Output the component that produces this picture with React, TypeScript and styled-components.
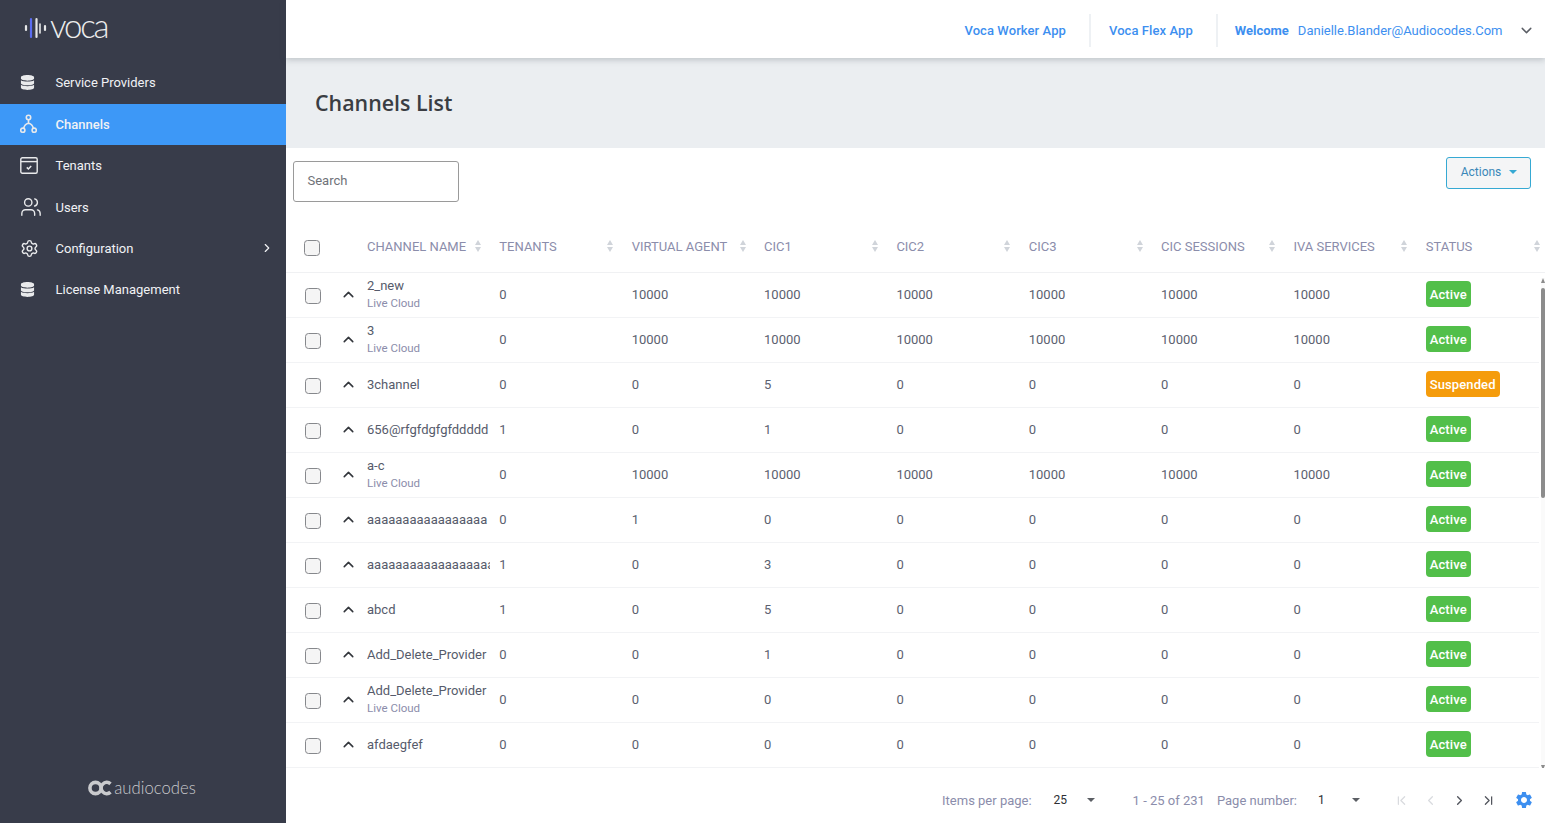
import React from "react";
import styled, { createGlobalStyle } from "styled-components";
import { Users, Settings, ChevronRight, ChevronDown, ChevronUp, ChevronFirst, ChevronLeft, ChevronLast } from "lucide-react";
import { FaDatabase } from "react-icons/fa";
import { MdSettings } from "react-icons/md";

const Global = createGlobalStyle`
  html, body { margin: 0; padding: 0; height: 100%; overflow: hidden; background: #fff; }
  body { font-family: Roboto, "Liberation Sans", sans-serif; font-size: 13px; }
  #root { height: 100%; }
  * { box-sizing: border-box; }
`;

const Shell = styled.div`display: flex; height: 823px; width: 1545px; overflow: hidden;`;
const Sidebar = styled.aside`width: 286px; flex: none; background: #383c4a; display: flex; flex-direction: column; color: #f0f1f4;`;
const LogoRow = styled.div`height: 62.2px; display: flex; align-items: center; padding: 0 0 6px 24px; gap: 0;`;
const LogoWord = styled.span`font-family: Lato, sans-serif; font-weight: 300; font-size: 33px; line-height: 30px; letter-spacing: -2.2px; color: #eceded; position: relative; top: -3px;`;
const Nav = styled.nav`display: flex; flex-direction: column;`;
const NavItem = styled.div<{ $active?: boolean }>`
  height: 41.4px; display: flex; align-items: center; padding: 0 12px 0 20px;
  background: ${p => (p.$active ? "#3d98f7" : "transparent")};
  font-size: 13px; font-weight: ${p => (p.$active ? 500 : 400)}; color: #f1f2f5;
`;
const NavIcon = styled.span`width: 35.5px; flex: none; display: flex; align-items: center; color: #e9eaec;`;
const NavLabel = styled.span`flex: 1;`;
const Footer = styled.div`margin-top: auto; height: 70px; display: flex; align-items: flex-start; justify-content: center; padding: 27px 2px 0 0; gap: 2px; color: #c9cacd;`;
const FooterWord = styled.span`font-family: Lato, sans-serif; font-weight: 300; font-size: 16.7px; line-height: 16px;`;

const Main = styled.main`flex: 1; min-width: 0; display: flex; flex-direction: column;`;
const Header = styled.header`height: 58px; flex: none; background: #fff; display: flex; align-items: center; justify-content: flex-end; box-shadow: 0 2px 6px rgba(60,70,80,.25); position: relative; z-index: 1; padding: 2px 10.5px 0 0;`;
const HeaderLink = styled.a`color: #3d8ff0; font-weight: 500; font-size: 13px; letter-spacing: .08px; padding: 0 23px 0 18px; height: 33px; display: flex; align-items: center; border-right: 2px solid #eef1f4;`;
const Welcome = styled.span`color: #3d8ff0; font-weight: 700; font-size: 13px; padding-left: 17px;`;
const Email = styled.span`color: #3d8ff0; font-size: 13px; margin-left: 9px;`;
const HeaderChevron = styled.span`display: flex; margin-left: 15px; color: #5b5f66;`;
const TitleBand = styled.div`height: 90px; flex: none; background: #ebeef1; display: flex; align-items: center; padding: 0 0 2px 29px;`;
const Title = styled.h1`margin: 0; font-family: "Open Sans", sans-serif; font-weight: 600; font-size: 21.4px; color: #3a3d43;`;
const Toolbar = styled.div`height: 74px; flex: none; display: flex; align-items: flex-start; justify-content: space-between; padding: 9px 14px 0 7px;`;
const Search = styled.div`width: 166px; height: 41px; margin-top: 4px; border: 1px solid #9a9a9a; border-radius: 3px; padding: 0 14px 2px 13.5px; display: flex; align-items: center; color: #6f7278; font-size: 13px;`;
const ActionsButton = styled.button`width: 85px; height: 32px; border: 1px solid #36a9d3; border-radius: 3px; background: #f4f5f6; color: #3a87b8; font: 400 12px Roboto, sans-serif; display: flex; align-items: center; justify-content: center; gap: 8px; padding: 0 0 3px 1px;`;
const Caret = styled.span<{ $c?: string }>`width: 0; height: 0; border-left: 4px solid transparent; border-right: 4px solid transparent; border-top: 4px solid ${p => p.$c ?? "#36a9d3"};`;

const TableWrap = styled.div`flex: 1; min-height: 0; position: relative;`;
const Grid = `display: grid; grid-template-columns: 81px repeat(8, 132.35px) 1fr; align-items: center;`;
const HeadRow = styled.div`${Grid} height: 51px; border-bottom: 1px solid #f0f1f3;`;
const HeadCell = styled.div`width: 114px; display: flex; align-items: center; justify-content: space-between; padding-bottom: 2px; color: #8b8dab; font-size: 13px; height: 100%;`;
const SortGlyph = styled.span`display: flex; flex-direction: column; gap: 2px;
  i { display: block; width: 0; height: 0; border-left: 3px solid transparent; border-right: 3px solid transparent; }
  i:first-child { border-bottom: 5px solid #d0d4da; }
  i:last-child { border-top: 5px solid #d0d4da; }
`;
const LeadCell = styled.div<{ $head?: boolean }>`display: flex; align-items: center; padding-left: ${p => (p.$head ? 18 : 19)}px; gap: 19px; color: #33363c;`;
const Check = styled.span`width: 16px; height: 16px; margin-top: 2px; border: 1px solid #86888c; border-radius: 3.5px; background: #f5f5f5; display: block; flex: none;`;
const Expand = styled(ChevronUp)`margin-bottom: 1px;`;
const Row = styled.div`${Grid} height: 45px; border-bottom: 1px solid #f2f3f5; margin-right: 6px;`;
const NameCell = styled.div`max-width: 123px; overflow: hidden; white-space: nowrap; color: #565b6b; font-size: 13px; line-height: 16px;`;
const Sub = styled.div`color: #8b8dab; font-size: 11.5px; line-height: 17px; margin-top: 1px;`;
const Val = styled.div`color: #5c6170; font-size: 13px; margin-bottom: 2px;`;
const BadgeCell = styled.div`margin-bottom: 2px; display: flex;`;
const Badge = styled.span<{ $s?: boolean }>`display: inline-flex; align-items: center; height: 26px; padding: 0 4px; border-radius: 4px; color: #fff; font-size: 13px; font-weight: 500; letter-spacing: .1px; background: ${p => (p.$s ? "#f59c0c" : "#52bf4a")};`;
const Track = styled.div`position: absolute; right: 0; top: 56px; height: 492px; width: 4px; background: #fafafa; display: flex; flex-direction: column; justify-content: space-between; align-items: center;`;
const ArrowUp = styled.span`width: 0; height: 0; border-left: 2px solid transparent; border-right: 2px solid transparent; border-bottom: 5px solid #8c8c8c;`;
const ArrowDown = styled.span`width: 0; height: 0; border-left: 2px solid transparent; border-right: 2px solid transparent; border-top: 5px solid #8c8c8c;`;
const Thumb = styled.div`position: absolute; left: 0; top: 10px; height: 210px; width: 4px; border-radius: 2px; background: #8c8c8c;`;
const Pager = styled.div`position: absolute; left: 0; right: 0; bottom: 0; height: 55px; background: #fff; display: flex; align-items: center; justify-content: flex-end; color: #8b8dab; font-size: 13px; padding: 9px 11px 0 0;`;
const PagerLabel = styled.span<{ $gap?: number }>`margin-left: ${p => p.$gap ?? 0}px;`;
const PagerSelect = styled.span<{ $w: number; $gap: number }>`width: ${p => p.$w}px; margin-left: ${p => p.$gap}px; display: flex; align-items: center; justify-content: space-between; color: #2d2f33; font-size: 12px; font-weight: 400; padding-right: 4px;`;
const PagerIcon = styled.span<{ $off?: boolean; $gap?: number }>`width: 29px; margin-left: ${p => p.$gap ?? 0}px; display: flex; justify-content: center; color: ${p => (p.$off ? "#d9dbdf" : "#53565e")};`;
const GearIcon = styled.span`display: flex; margin-left: 11px; color: #3d8ff0;`;

type R = { name: string; sub?: boolean; v: (string | number)[]; s?: boolean };
const tenK = [10000, 10000, 10000, 10000, 10000, 10000];
const rows: R[] = [
  { name: "2_new", sub: true, v: [0, ...tenK] },
  { name: "3", sub: true, v: [0, ...tenK] },
  { name: "3channel", v: [0, 0, 5, 0, 0, 0, 0], s: true },
  { name: "656@rfgfdgfgfddddd", v: [1, 0, 1, 0, 0, 0, 0] },
  { name: "a-c", sub: true, v: [0, ...tenK] },
  { name: "a".repeat(17), v: [0, 1, 0, 0, 0, 0, 0] },
  { name: "a".repeat(22), v: [1, 0, 3, 0, 0, 0, 0] },
  { name: "abcd", v: [1, 0, 5, 0, 0, 0, 0] },
  { name: "Add_Delete_Provider", v: [0, 0, 1, 0, 0, 0, 0] },
  { name: "Add_Delete_Provider", sub: true, v: [0, 0, 0, 0, 0, 0, 0] },
  { name: "afdaegfef", v: [0, 0, 0, 0, 0, 0, 0] },
];
const heads = ["CHANNEL NAME", "TENANTS", "VIRTUAL AGENT", "CIC1", "CIC2", "CIC3", "CIC SESSIONS", "IVA SERVICES", "STATUS"];

const VocaBars = () => (
  <svg width="26" height="24" viewBox="0 0 26 24" fill="none" strokeLinecap="round">
    <path d="M2 10v4" stroke="#e6e7e8" strokeWidth="2.2" />
    <path d="M7 3v18" stroke="#5a6cf0" strokeWidth="2.2" />
    <path d="M12.5 3v18" stroke="#e6e7e8" strokeWidth="2.2" />
    <path d="M16 8v9" stroke="#e6e7e8" strokeWidth="1.6" />
    <path d="M21 10v4" stroke="#e6e7e8" strokeWidth="2.2" />
  </svg>
);
const TreeIcon = () => (
  <svg width="17" height="20" viewBox="0 0 17 20" fill="none" stroke="currentColor" strokeWidth="1.6">
    <circle cx="8.5" cy="3.5" r="2.2" /><circle cx="2.8" cy="16.2" r="2.1" /><circle cx="14.2" cy="16.2" r="2.1" />
    <path d="M8.5 5.7v3.5M8.5 9.2c-2.6.6-4.4 2.8-4.8 5.1M8.5 9.2c2.6.6 4.4 2.8 4.8 5.1" />
  </svg>
);
const TenantIcon = () => (
  <svg width="18" height="17" viewBox="0 0 18 17" fill="none" stroke="currentColor" strokeWidth="1.4">
    <rect x=".8" y=".8" width="16.4" height="15.4" rx="1.5" /><path d="M.8 4.6h16.4" />
    <path d="M6.8 10.4l1.6 1.6 2.8-3" strokeWidth="1.5" />
  </svg>
);
const AcMark = () => (
  <svg width="24" height="16" viewBox="0 0 24 16" fill="none" stroke="#c9cacd" strokeWidth="3.6">
    <circle cx="7.5" cy="8" r="5.6" /><path d="M22.5 3.8a5.6 5.6 0 1 0 0 8.4" />
  </svg>
);

export default function App() {
  return (
    <Shell>
      <Global />
      <Sidebar>
        <LogoRow><VocaBars /><LogoWord>voca</LogoWord></LogoRow>
        <Nav>
          <NavItem><NavIcon><FaDatabase size={15} /></NavIcon><NavLabel>Service Providers</NavLabel></NavItem>
          <NavItem $active><NavIcon><TreeIcon /></NavIcon><NavLabel>Channels</NavLabel></NavItem>
          <NavItem><NavIcon><TenantIcon /></NavIcon><NavLabel>Tenants</NavLabel></NavItem>
          <NavItem><NavIcon><Users size={22} strokeWidth={1.5} /></NavIcon><NavLabel>Users</NavLabel></NavItem>
          <NavItem><NavIcon><Settings size={19} strokeWidth={1.8} /></NavIcon><NavLabel>Configuration</NavLabel><ChevronRight size={14} strokeWidth={2} /></NavItem>
          <NavItem><NavIcon><FaDatabase size={15} /></NavIcon><NavLabel>License Management</NavLabel></NavItem>
        </Nav>
        <Footer><AcMark /><FooterWord>audiocodes</FooterWord></Footer>
      </Sidebar>
      <Main>
        <Header>
          <HeaderLink>Voca Worker App</HeaderLink>
          <HeaderLink>Voca Flex App</HeaderLink>
          <Welcome>Welcome</Welcome>
          <Email>Danielle.Blander@Audiocodes.Com</Email>
          <HeaderChevron><ChevronDown size={17} strokeWidth={2} /></HeaderChevron>
        </Header>
        <TitleBand><Title>Channels List</Title></TitleBand>
        <Toolbar>
          <Search>Search</Search>
          <ActionsButton>Actions <Caret /></ActionsButton>
        </Toolbar>
        <TableWrap>
          <HeadRow>
            <LeadCell $head><Check /></LeadCell>
            {heads.map(h => (
              <HeadCell key={h}>{h}<SortGlyph><i /><i /></SortGlyph></HeadCell>
            ))}
          </HeadRow>
          {rows.map((r, i) => (
            <Row key={i}>
              <LeadCell><Check /><Expand size={17} strokeWidth={2.2} /></LeadCell>
              <NameCell>{r.name}{r.sub && <Sub>Live Cloud</Sub>}</NameCell>
              {r.v.map((x, j) => <Val key={j}>{x}</Val>)}
              <BadgeCell><Badge $s={r.s}>{r.s ? "Suspended" : "Active"}</Badge></BadgeCell>
            </Row>
          ))}
          <Track><ArrowUp /><ArrowDown /><Thumb /></Track>
          <Pager>
            <PagerLabel>Items per page:</PagerLabel>
            <PagerSelect $w={45} $gap={22}>25 <Caret $c="#5b5e64" /></PagerSelect>
            <PagerLabel $gap={34}>1 - 25 of 231</PagerLabel>
            <PagerLabel $gap={12}>Page number:</PagerLabel>
            <PagerSelect $w={46} $gap={21}>1 <Caret $c="#5b5e64" /></PagerSelect>
            <PagerIcon $off $gap={23}><ChevronFirst size={15} /></PagerIcon>
            <PagerIcon $off><ChevronLeft size={15} /></PagerIcon>
            <PagerIcon><ChevronRight size={15} strokeWidth={2.2} /></PagerIcon>
            <PagerIcon><ChevronLast size={15} /></PagerIcon>
            <GearIcon><MdSettings size={20} /></GearIcon>
          </Pager>
        </TableWrap>
      </Main>
    </Shell>
  );
}
